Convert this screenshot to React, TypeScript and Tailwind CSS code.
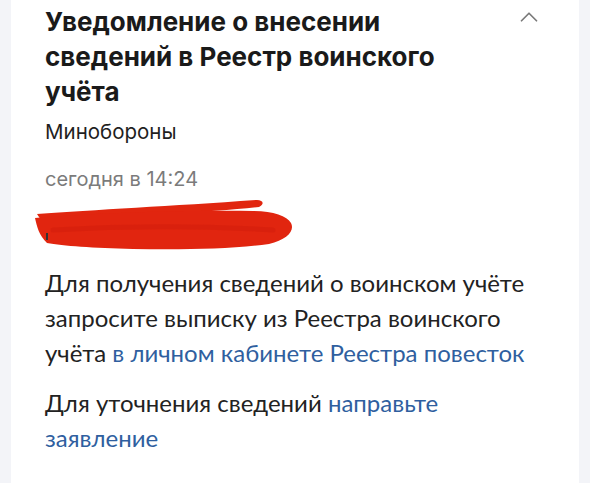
import { ChevronUp } from 'lucide-react';

const head = { fontFamily: 'Inter, "Noto Sans", sans-serif' };
const body = { fontFamily: 'Lato, "Noto Sans", sans-serif' };

function Scribble() {
  return (
    <svg width="270" height="54" viewBox="0 0 270 54" className="block">
      <path d="M4 16 C60 12 140 8 224 2 C230 2 232 6 226 9 C180 14 100 18 8 22 Z" fill="#e1260f" />
      <path
        d="M2 20 C50 16 140 12 220 13 C240 13 254 18 258 25 C262 33 254 42 236 46 C200 51 150 52 100 51 C60 50 30 48 14 45 C6 37 4 29 2 20 Z"
        fill="#e1250f"
      />
      <path d="M20 32 C90 28 170 28 240 32" stroke="#d41e0b" strokeWidth="5" fill="none" strokeLinecap="round" opacity="0.6" />
      <rect x="13" y="35" width="2" height="7" fill="#333" />
    </svg>
  );
}

export default function App() {
  return (
    <div className="h-[483px] w-[590px] overflow-hidden bg-[#f3f4f8] px-[11px]">
      <div className="relative h-full bg-white pl-[34px] pr-[40px] pt-[4px]">
        <ChevronUp className="absolute right-[35px] top-[2px] text-[#7a7a7a]" size={30} strokeWidth={1.4} />
        <h1 className="w-[420px] text-[26px] font-bold leading-[35px] text-[#1a1a1a]" style={head}>
          Уведомление о внесении сведений в Реестр воинского учёта
        </h1>
        <p className="mt-[10px] text-[20.5px] leading-[26px] text-[#1f1f1f]" style={head}>Минобороны</p>
        <p className="mt-[21px] text-[20px] leading-[26px] text-[#7b7b7b]" style={head}>сегодня в 14:24</p>
        <div className="-ml-[12px] mt-[6px]">
          <Scribble />
        </div>
        <div className="mt-[13px] text-[24px] leading-[35px] text-[#222]" style={body}>
          <p>
            Для получения сведений о воинском учёте запросите выписку из Реестра воинского учёта{' '}
            <span className="text-[#2f5f9f]">в личном кабинете Реестра повесток</span>
          </p>
          <p className="mt-[15px]">
            Для уточнения сведений <span className="text-[#2f5f9f]">направьте заявление</span>
          </p>
        </div>
      </div>
    </div>
  );
}
